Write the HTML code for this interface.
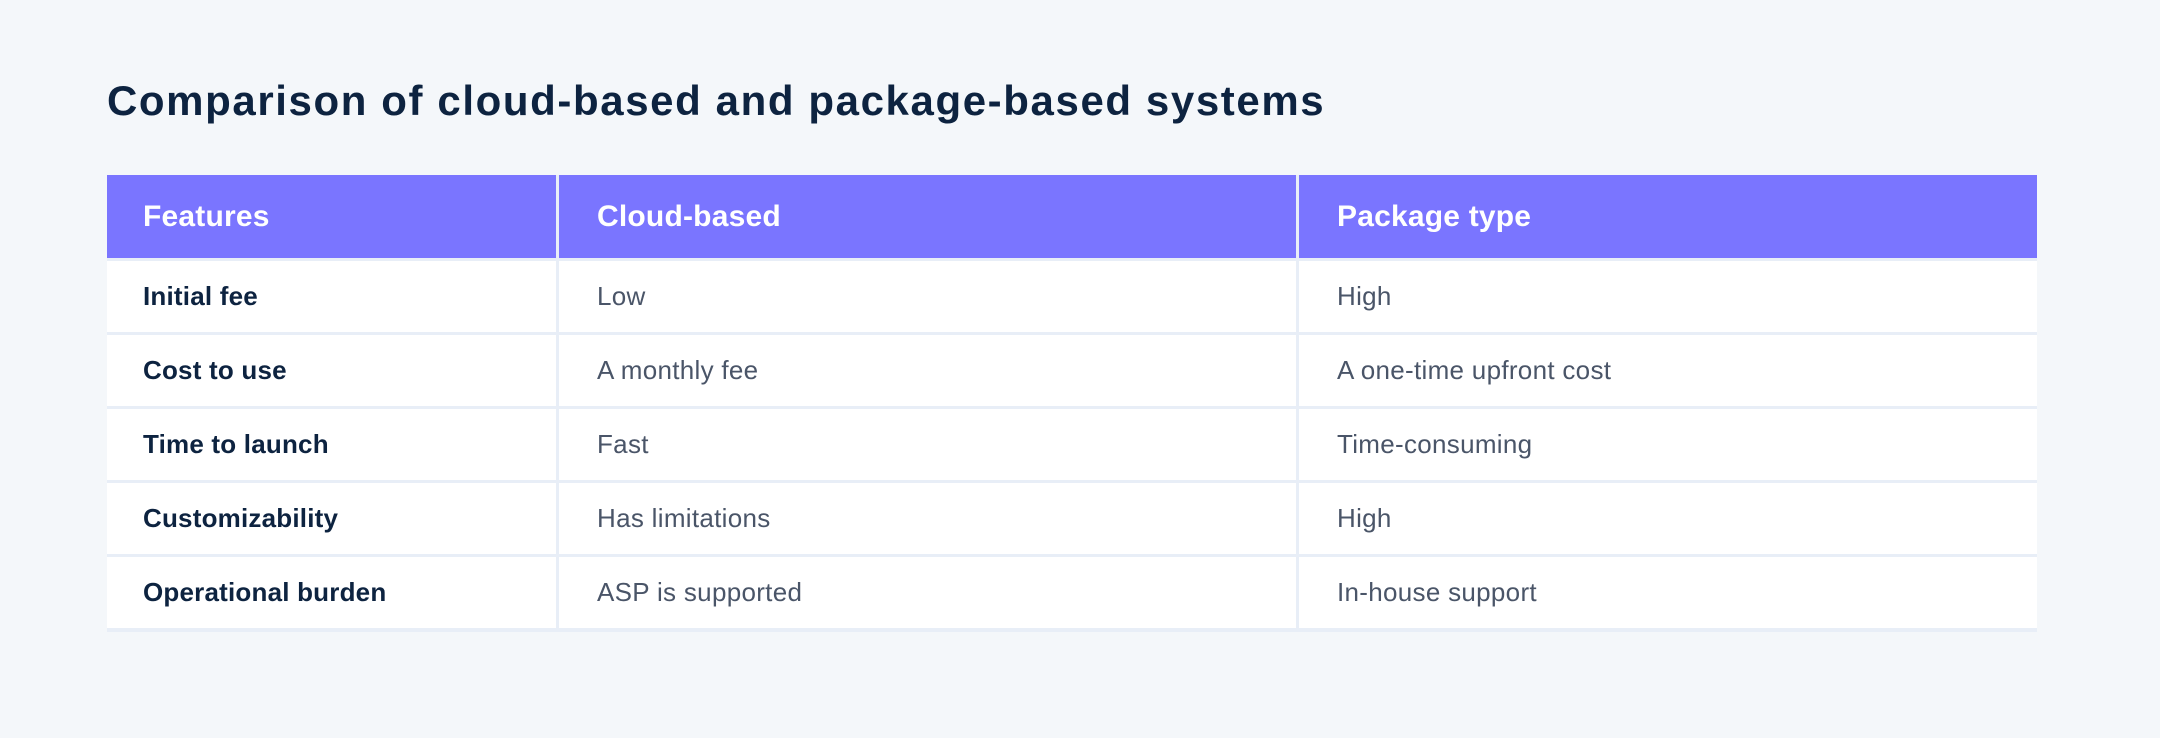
<!DOCTYPE html>
<html><head><meta charset="utf-8"><style>
*{margin:0;padding:0;box-sizing:border-box}
body{width:2160px;height:738px;background:#f4f7fa;font-family:"Liberation Sans",sans-serif;position:relative;overflow:hidden}
h1{position:absolute;left:107px;top:77px;font-size:42px;font-weight:bold;color:#0d2340;letter-spacing:1.6px}
.t{position:absolute;left:107px;top:175px;width:1930px;height:457px;background:#e8eef7;display:grid;grid-template-columns:449px 737px 738px;grid-template-rows:83px repeat(5,71px);column-gap:3px;row-gap:3px}
.t div{background:#fff;display:flex;align-items:center;font-size:26px;color:#4a5568;letter-spacing:0.3px}
.t div:nth-child(3n+1){padding-left:36px}
.t div:nth-child(3n+2),.t div:nth-child(3n){padding-left:38px}
.t .h{background:#7a75ff;color:#fff;font-size:30px;font-weight:bold;letter-spacing:0.2px}
.t .b{font-weight:bold;color:#0d2340;letter-spacing:0.2px}
</style></head><body>
<h1>Comparison of cloud-based and package-based systems</h1>
<div class="t">
<div class="h">Features</div><div class="h">Cloud-based</div><div class="h">Package type</div>
<div class="b">Initial fee</div><div>Low</div><div>High</div>
<div class="b">Cost to use</div><div>A monthly fee</div><div>A one-time upfront cost</div>
<div class="b">Time to launch</div><div>Fast</div><div>Time-consuming</div>
<div class="b">Customizability</div><div>Has limitations</div><div>High</div>
<div class="b">Operational burden</div><div>ASP is supported</div><div>In-house support</div>
</div>
</body></html>
